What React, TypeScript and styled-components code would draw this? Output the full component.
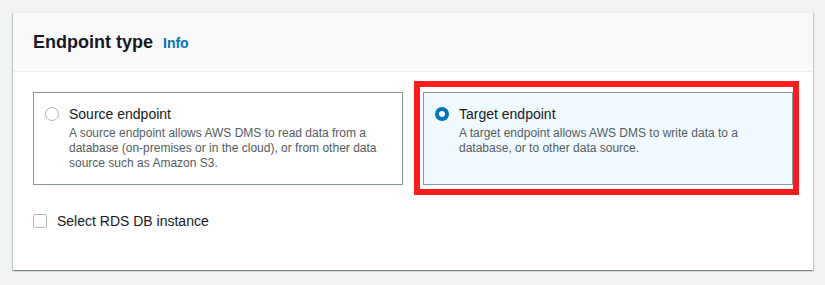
import styled, { createGlobalStyle } from 'styled-components';

/* ── Global ── */
const GlobalStyle = createGlobalStyle`
  html, body {
    margin: 0;
    padding: 0;
    background: #f2f3f3;
    font-family: "Liberation Sans", Arial, sans-serif;
    color: #16191f;
  }
  * { box-sizing: border-box; }
`;

/* ── Layout ── */
const Page = styled.div`
  padding: 12px 12px 14px 13px;
`;

const Panel = styled.section`
  width: 800px;
  background: #ffffff;
  box-shadow: 0 1px 1px 0 rgba(0, 28, 36, 0.3), 1px 1px 1px 0 rgba(0, 28, 36, 0.15),
    -1px 1px 1px 0 rgba(0, 28, 36, 0.15);
  border-top: 1px solid #eaeded;
`;

/* ── Header ── */
const Header = styled.header`
  display: flex;
  align-items: baseline;
  gap: 10px;
  height: 59px;
  padding: 18px 20px 0;
  background: #fafafa;
  border-bottom: 1px solid #eaeded;
`;

const Title = styled.h2`
  margin: 0;
  font-size: 18px;
  line-height: 22px;
  font-weight: 700;
  color: #16191f;
`;

const InfoLink = styled.a`
  font-size: 14px;
  font-weight: 700;
  color: #0073bb;
  text-decoration: none;
  cursor: pointer;
`;

/* ── Body ── */
const Body = styled.div`
  padding: 20px 20px 39px;
  display: flex;
  flex-direction: column;
  gap: 26px;
`;

const TileGrid = styled.div`
  display: grid;
  grid-template-columns: 1fr 1fr;
  gap: 20px;
`;

const Tile = styled.label<{ $selected: boolean; $highlight?: boolean }>`
  position: relative;
  display: flex;
  align-items: flex-start;
  gap: 10px;
  min-height: 91px;
  padding: 11px 14px 13px 11px;
  border: 1px solid ${p => (p.$selected ? '#8a9899' : '#879596')};
  background: ${p => (p.$selected ? '#f1faff' : '#ffffff')};
  cursor: pointer;

  ${p =>
    p.$highlight &&
    `
    &::after {
      content: '';
      position: absolute;
      top: -12px;
      left: -10px;
      right: -7px;
      bottom: -11px;
      border: 6px solid #ff1c1c;
      pointer-events: none;
    }
  `}
`;

const Radio = styled.span<{ $checked: boolean }>`
  flex: none;
  width: 14px;
  height: 14px;
  margin-top: 3px;
  border-radius: 50%;
  border: ${p => (p.$checked ? '4px solid #0073bb' : '1px solid #aab7b8')};
  background: #ffffff;
`;

const TileText = styled.div`
  display: flex;
  flex-direction: column;
  gap: 2px;
`;

const TileTitle = styled.span`
  font-size: 14px;
  line-height: 20px;
  color: #16191f;
`;

const TileDesc = styled.span`
  font-size: 12px;
  line-height: 15px;
  color: #545b64;
`;

const CheckRow = styled.label`
  display: flex;
  align-items: center;
  gap: 10px;
  font-size: 14px;
  line-height: 20px;
  color: #16191f;
  cursor: pointer;
`;

const Checkbox = styled.span`
  width: 14px;
  height: 14px;
  border: 1px solid #aab7b8;
  border-radius: 2px;
  background: #ffffff;
`;

/* ── Data ── */
const tiles = [
  {
    id: 'source',
    title: 'Source endpoint',
    desc: 'A source endpoint allows AWS DMS to read data from a database (on-premises or in the cloud), or from other data source such as Amazon S3.',
    selected: false,
  },
  {
    id: 'target',
    title: 'Target endpoint',
    desc: 'A target endpoint allows AWS DMS to write data to a database, or to other data source.',
    selected: true,
  },
];

export default function App() {
  return (
    <>
      <GlobalStyle />
      <Page>
        <Panel>
          <Header>
            <Title>Endpoint type</Title>
            <InfoLink>Info</InfoLink>
          </Header>
          <Body>
            <TileGrid>
              {tiles.map(t => (
                <Tile key={t.id} $selected={t.selected} $highlight={t.selected}>
                  <Radio $checked={t.selected} />
                  <TileText>
                    <TileTitle>{t.title}</TileTitle>
                    <TileDesc>{t.desc}</TileDesc>
                  </TileText>
                </Tile>
              ))}
            </TileGrid>
            <CheckRow>
              <Checkbox />
              Select RDS DB instance
            </CheckRow>
          </Body>
        </Panel>
      </Page>
    </>
  );
}
